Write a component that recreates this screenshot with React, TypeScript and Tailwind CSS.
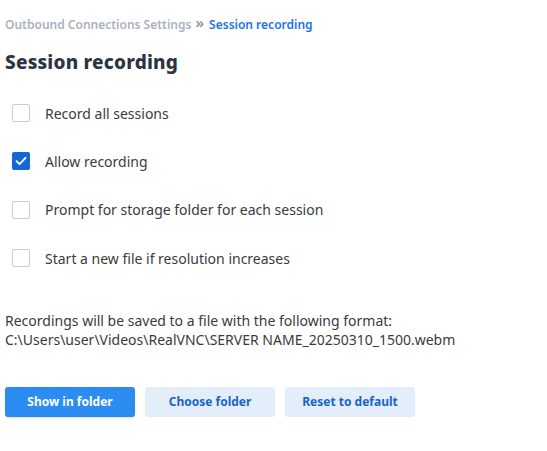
import { useState } from "react";

const options = [
  { id: "all", label: "Record all sessions", checked: false },
  { id: "allow", label: "Allow recording", checked: true },
  { id: "prompt", label: "Prompt for storage folder for each session", checked: false },
  { id: "newfile", label: "Start a new file if resolution increases", checked: false },
];

export default function App() {
  const [checked, setChecked] = useState<Record<string, boolean>>(
    Object.fromEntries(options.map((o) => [o.id, o.checked]))
  );

  const toggle = (id: string) =>
    setChecked((prev) => ({ ...prev, [id]: !prev[id] }));

  return (
    <main className="w-[547px] h-[451px] bg-white px-[5px] pt-[16px] font-['Noto_Sans',sans-serif] text-[#3b3b3b]">
      <nav className="flex items-center text-[12px] font-semibold leading-[18px]">
        <span className="text-[#aab2be]">Outbound Connections Settings</span>
        <span className="ml-[4px] mr-[5px] -translate-y-[3px] text-[#8a929c] text-[15px] leading-none">»</span>
        <span className="text-[#1a73e8]">Session recording</span>
      </nav>

      <h1 className="mt-[15px] text-[19px] font-extrabold leading-[26px] text-[#2c3441] tracking-[0.2px]">
        Session recording
      </h1>

      <div className="mt-[28px] flex flex-col gap-[28.4px] pl-[7px]">
        {options.map((o) => (
          <label
            key={o.id}
            className="flex items-center gap-[15px] h-[20px] cursor-pointer text-[14px]"
          >
            <button
              type="button"
              onClick={() => toggle(o.id)}
              className={
                checked[o.id]
                  ? "w-[18px] h-[18px] rounded-[2px] bg-[#1467d6] flex items-center justify-center"
                  : "w-[18px] h-[18px] rounded-[2px] border border-[#c9cdd3] bg-white"
              }
            >
              {checked[o.id] && (
                <svg width="14" height="14" viewBox="0 0 14 14" fill="none">
                  <path
                    d="M2.5 7.2 L5.6 10.2 L11.5 3.8"
                    stroke="white"
                    strokeWidth="1.8"
                    strokeLinecap="round"
                    strokeLinejoin="round"
                  />
                </svg>
              )}
            </button>
            <span>{o.label}</span>
          </label>
        ))}
      </div>

      <div className="mt-[43px] text-[14px] leading-[19px]">
        <p>Recordings will be saved to a file with the following format:</p>
        <p>C:\Users\user\Videos\RealVNC\SERVER NAME_20250310_1500.webm</p>
      </div>

      <div className="mt-[38px] flex gap-[10px] text-[12px] font-bold">
        <button className="w-[130px] h-[30px] rounded-[3px] bg-[#2b8cf2] text-white shadow-sm">
          Show in folder
        </button>
        <button className="w-[130px] h-[30px] rounded-[3px] bg-[#e3eefa] text-[#1a64c9]">
          Choose folder
        </button>
        <button className="w-[130px] h-[30px] rounded-[3px] bg-[#e3eefa] text-[#1a64c9]">
          Reset to default
        </button>
      </div>
    </main>
  );
}
